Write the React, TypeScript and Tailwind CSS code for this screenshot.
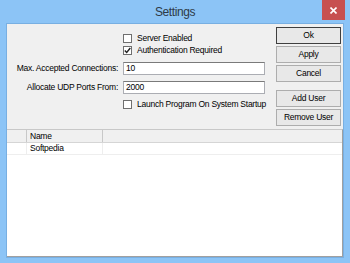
import React from "react";

function Check({ checked }: { checked?: boolean }) {
  return (
    <div className="w-[9px] h-[9px] border border-[#6f6f6f] bg-white flex items-center justify-center shrink-0">
      {checked && (
        <svg width="7" height="7" viewBox="0 0 7 7">
          <path d="M0.8 3.4 L2.7 5.4 L6.3 1" stroke="#222" strokeWidth="1.4" fill="none" />
        </svg>
      )}
    </div>
  );
}

function Btn({ label, def }: { label: string; def?: boolean }) {
  return (
    <div
      className={`h-[17px] w-full flex items-center justify-center bg-[#e8e8e8] border ${
        def ? "border-[#3f3f3f]" : "border-[#adadad]"
      } text-[8.5px] tracking-[-0.25px] text-black whitespace-nowrap`}
    >
      {label}
    </div>
  );
}

export default function App() {
  return (
    <div className="w-[350px] h-[263px] bg-[#8cc4f6] flex flex-col font-['Liberation_Sans',sans-serif] overflow-hidden">
      <div className="h-[23px] grid grid-cols-[1fr_auto_1fr] shrink-0">
        <div />
        <div className="pt-[5px] text-[12px] leading-[14px] tracking-[-0.4px] text-[#2e3a46]">Settings</div>
        <div className="flex justify-end pr-[5px]">
          <div className="w-[23px] h-[20px] bg-[#c75050] flex items-center justify-center">
            <svg width="7" height="7" viewBox="0 0 7 7">
              <path d="M0.5 0.5 L6.5 6.5 M6.5 0.5 L0.5 6.5" stroke="#fff" strokeWidth="1.6" />
            </svg>
          </div>
        </div>
      </div>
      <div className="mx-[6px] mb-[5px] flex-1 border border-[#78afe2] bg-[#f0f0f0] flex flex-col">
        <div className="h-[105px] flex shrink-0">
          <div className="flex-1 min-w-0 flex flex-col pt-[8px] text-[8.5px] tracking-[-0.25px] text-black whitespace-nowrap">
            <div className="h-[12px] flex items-center pl-[116px] gap-[5px]">
              <Check />
              <span>Server Enabled</span>
            </div>
            <div className="h-[13px] flex items-center pl-[116px] gap-[5px]">
              <Check checked />
              <span>Authentication Required</span>
            </div>
            <div className="mt-[5px] grid grid-cols-[111px_1fr] gap-x-[5px] gap-y-[6px] items-center">
              <span className="text-right">Max. Accepted Connections:</span>
              <div className="h-[13px] bg-white border border-[#abadb3] border-t-[#7a7a7a] flex items-center pl-[2px]">10</div>
              <span className="text-right">Allocate UDP Ports From:</span>
              <div className="h-[13px] bg-white border border-[#abadb3] border-t-[#7a7a7a] flex items-center pl-[2px]">2000</div>
            </div>
            <div className="mt-[4px] h-[12px] flex items-center pl-[116px] gap-[5px]">
              <Check />
              <span>Launch Program On System Startup</span>
            </div>
          </div>
          <div className="w-[65px] shrink-0 ml-[11px] mr-[2px] pt-[3px] flex flex-col gap-[2px]">
            <Btn label="Ok" def />
            <Btn label="Apply" />
            <Btn label="Cancel" />
            <div className="mt-[6px] flex flex-col gap-[2px]">
              <Btn label="Add User" />
              <Btn label="Remove User" />
            </div>
          </div>
        </div>
        <div className="flex-1 bg-white border-t border-[#c8c8c8] border-r border-b border-r-[#a0a0a0] border-b-[#a0a0a0] flex flex-col text-[8.5px] tracking-[-0.25px] text-black">
          <div className="h-[13px] bg-[#f0f0f0] border-b border-[#d5d5d5] flex">
            <div className="w-[20px] border-r border-[#c8c8c8]" />
            <div className="w-[76px] border-r border-[#c8c8c8] pl-[3px] flex items-center">Name</div>
            <div className="flex-1" />
          </div>
          <div className="h-[12px] border-b border-[#eeeeee] flex">
            <div className="w-[20px] border-r border-[#eeeeee]" />
            <div className="w-[76px] border-r border-[#eeeeee] pl-[3px] flex items-center">Softpedia</div>
            <div className="flex-1" />
          </div>
        </div>
      </div>
    </div>
  );
}
